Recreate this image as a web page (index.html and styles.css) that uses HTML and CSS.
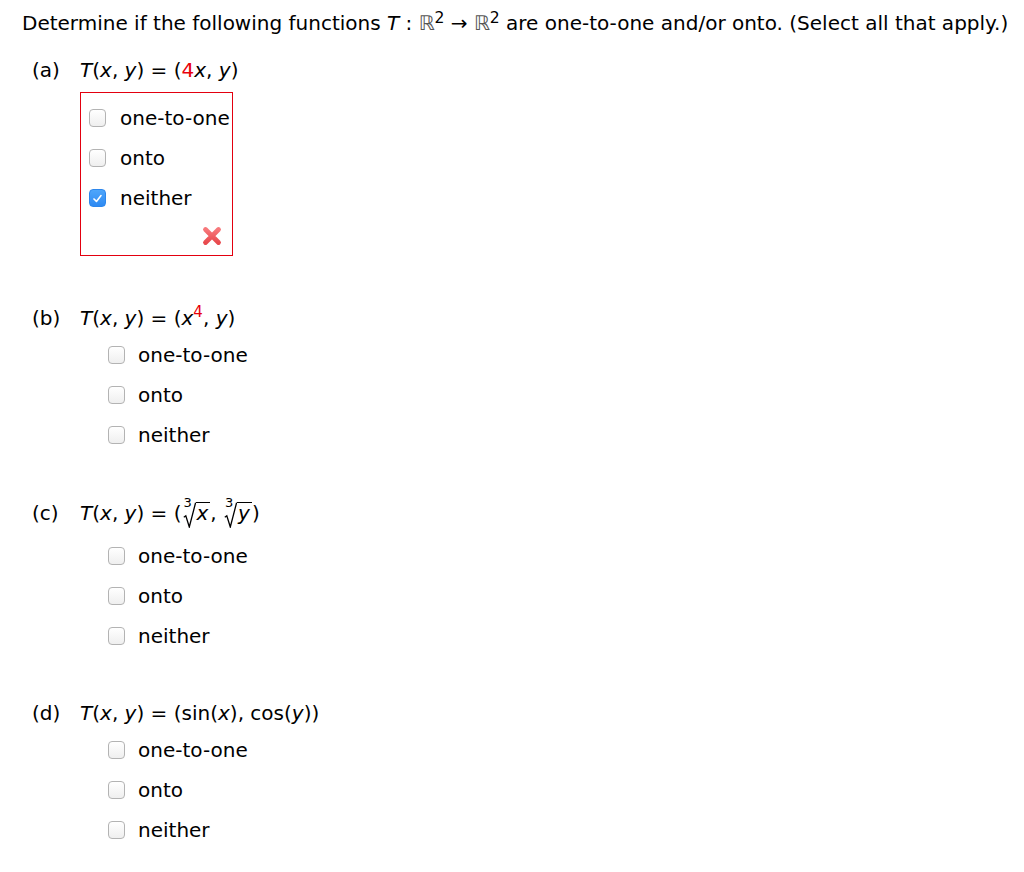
FILE: index.html
```html
<!DOCTYPE html>
<html>
<head>
<meta charset="utf-8">
<link rel="stylesheet" href="styles.css">
</head>
<body>
<div class="page">
  <p class="prompt">Determine if the following functions <i>T</i> : <span class="bb">ℝ</span><sup class="sq">2</sup> <span class="arrow">→</span> <span class="bb">ℝ</span><sup class="sq">2</sup> are one-to-one and/or onto. (Select all that apply.)</p>

  <section class="part part-a">
    <div class="head"><span class="label">(a)</span><span class="expr"><i>T</i>(<i>x</i>, <i>y</i>) = (<span class="red">4</span><i>x</i>, <i>y</i>)</span></div>
    <div class="box">
      <label class="opt"><span class="cb"></span><span class="txt">one-to-one</span></label>
      <label class="opt"><span class="cb"></span><span class="txt">onto</span></label>
      <label class="opt"><span class="cb checked"><svg viewBox="0 0 17 17" width="17" height="17"><path d="M4.5 9 L7.3 11.8 L12.5 5.2" fill="none" stroke="#fff" stroke-width="1.8" stroke-linecap="round" stroke-linejoin="round"/></svg></span><span class="txt">neither</span></label>
      <div class="mark">
        <svg viewBox="0 0 20 20" width="20" height="20">
          <defs><linearGradient id="xg" x1="0" y1="0" x2="0" y2="1"><stop offset="0" stop-color="#f7777a"/><stop offset="1" stop-color="#e84a4e"/></linearGradient></defs>
          <path d="M3.5 3.5 L16.5 16.5 M16.5 3.5 L3.5 16.5" stroke="url(#xg)" stroke-width="4.8" stroke-linecap="round"/>
        </svg>
      </div>
    </div>
  </section>

  <section class="part part-b">
    <div class="head"><span class="label">(b)</span><span class="expr"><i>T</i>(<i>x</i>, <i>y</i>) = (<i>x</i><sup class="red pow">4</sup>, <i>y</i>)</span></div>
    <div class="opts">
      <label class="opt"><span class="cb"></span><span class="txt">one-to-one</span></label>
      <label class="opt"><span class="cb"></span><span class="txt">onto</span></label>
      <label class="opt"><span class="cb"></span><span class="txt">neither</span></label>
    </div>
  </section>

  <section class="part part-c">
    <div class="head"><span class="label">(c)</span><span class="expr"><i>T</i>(<i>x</i>, <i>y</i>) = (<span class="root"><span class="idx">3</span><svg class="radsign" viewBox="0 0 13 26" preserveAspectRatio="none"><path d="M0.8 15.2 L2.8 13.8 L6.3 25 L12.6 0.7" fill="none" stroke="#000" stroke-width="1.3" stroke-linejoin="miter"/></svg><span class="under"><i>x</i></span></span>, <span class="root"><span class="idx">3</span><svg class="radsign" viewBox="0 0 13 26" preserveAspectRatio="none"><path d="M0.8 15.2 L2.8 13.8 L6.3 25 L12.6 0.7" fill="none" stroke="#000" stroke-width="1.3" stroke-linejoin="miter"/></svg><span class="under"><i>y</i></span></span>)</span></div>
    <div class="opts">
      <label class="opt"><span class="cb"></span><span class="txt">one-to-one</span></label>
      <label class="opt"><span class="cb"></span><span class="txt">onto</span></label>
      <label class="opt"><span class="cb"></span><span class="txt">neither</span></label>
    </div>
  </section>

  <section class="part part-d">
    <div class="head"><span class="label">(d)</span><span class="expr"><i>T</i>(<i>x</i>, <i>y</i>) = (sin(<i>x</i>), cos(<i>y</i>))</span></div>
    <div class="opts">
      <label class="opt"><span class="cb"></span><span class="txt">one-to-one</span></label>
      <label class="opt"><span class="cb"></span><span class="txt">onto</span></label>
      <label class="opt"><span class="cb"></span><span class="txt">neither</span></label>
    </div>
  </section>
</div>
</body>
</html>
```

FILE: styles.css
```css
html, body {
  margin: 0;
  padding: 0;
  background: #fff;
}
body {
  font-family: "DejaVu Sans", Verdana, sans-serif;
  font-size: 20px;
  color: #000;
}
.page {
  padding: 10px 0 0 22px;
}
.prompt {
  margin: 0;
  line-height: 26px;
  white-space: nowrap;
}
i {
  font-style: italic;
}
.bb {
  color: #555;
}
.sq {
  font-size: 0.78em;
  line-height: 0;
  vertical-align: 0.42em;
}
.arrow {
  font-size: 1em;
}
.red {
  color: #e8000b;
}
.part {
  margin: 0;
}
.head {
  display: flex;
  align-items: center;
  height: 26px;
  line-height: 26px;
  white-space: nowrap;
}
.label {
  width: 48px;
  padding-left: 10px;
  flex: none;
}
.pow {
  font-size: 0.75em;
  line-height: 0;
  vertical-align: 0.55em;
}
.part-a {
  margin-top: 21px;
}
.part-b {
  margin-top: 49px;
}
.part-c {
  margin-top: 45px;
}
.part-d {
  margin-top: 44px;
}
.box {
  margin: 9px 0 0 58px;
  border: 1px solid #e3000f;
  padding: 5px 0 9px 8px;
  box-sizing: border-box;
  width: 153px;
}
.opt {
  display: flex;
  align-items: center;
  height: 40px;
  white-space: nowrap;
}
.cb {
  width: 17px;
  height: 18px;
  box-sizing: border-box;
  border: 1px solid #b3b3b3;
  border-radius: 4px;
  background: linear-gradient(#ffffff, #efefef);
  flex: none;
  display: flex;
  align-items: center;
  justify-content: center;
}
.cb.checked {
  border-color: #2d87ec;
  background: linear-gradient(#4ea6fb, #2e8af3);
}
.cb svg {
  display: block;
}
.txt {
  margin-left: 14px;
}
.opts .txt {
  margin-left: 13px;
}
.mark {
  display: flex;
  justify-content: flex-end;
  padding-right: 10px;
  margin-top: 8px;
  height: 20px;
}
.mark svg {
  display: block;
}
.opts {
  margin: 4px 0 0 86px;
}
.part-c .opts {
  margin-top: 10px;
}
.root {
  position: relative;
  display: inline-block;
  padding-left: 13px;
  line-height: 20px;
  margin-left: 1px;
}
.radsign {
  position: absolute;
  left: 0;
  top: 0;
  width: 13px;
  height: calc(100% + 4px);
}
.idx {
  position: absolute;
  left: 1px;
  top: -6px;
  font-size: 13px;
  line-height: 13px;
}
.under {
  display: inline-block;
  border-top: 1.3px solid #000;
  padding: 0 2px 0 1px;
  line-height: 21px;
}
```
